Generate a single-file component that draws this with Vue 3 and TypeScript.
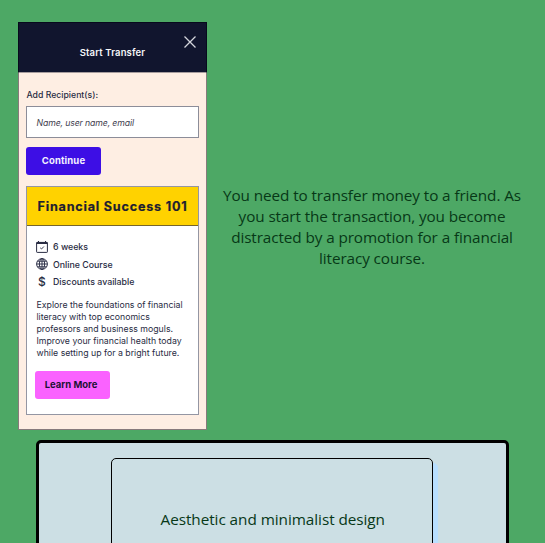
<script setup lang="ts">
interface Fact {
  icon: 'calendar' | 'globe' | 'dollar'
  label: string
}

const facts: Fact[] = [
  { icon: 'calendar', label: '6 weeks' },
  { icon: 'globe', label: 'Online Course' },
  { icon: 'dollar', label: 'Discounts available' },
]

const scenario: string[] = [
  'You need to transfer money to a friend. As',
  'you start the transaction, you become',
  'distracted by a promotion for a financial',
  'literacy course.',
]

const blurb: string[] = [
  'Explore the foundations of financial',
  'literacy with top economics',
  'professors and business moguls.',
  'Improve your financial health today',
  'while setting up for a bright future.',
]
</script>

<template>
  <main class="page">
    <section class="question">
      <div class="phone">
        <header class="phone-header">
          <svg class="close" viewBox="0 0 12 12" width="12" height="12">
            <path d="M.5.5 11.5 11.5M11.5.5.5 11.5" fill="none" stroke="#d4d5dc" stroke-width="1.3" />
          </svg>
          <span class="phone-title">Start Transfer</span>
        </header>
        <div class="phone-body">
          <div class="label">Add Recipient(s):</div>
          <div class="field"><span>Name, user name, email</span></div>
          <button class="btn continue">Continue</button>
          <article class="promo">
            <h2 class="promo-title">Financial Success 101</h2>
            <div class="promo-body">
              <ul class="facts">
                <li v-for="fact in facts" :key="fact.icon">
                  <svg v-if="fact.icon === 'calendar'" viewBox="0 0 12 12" width="12" height="12">
                    <rect x=".6" y="1.4" width="10.8" height="10" rx=".6" fill="none" stroke="#292c43" stroke-width="1" />
                    <path d="M.6 1h10.8v2H.6zM2 0h1v1H2zM9 0h1v1H9z" fill="#292c43" />
                    <path d="m4.2 6.8 1.3 1.2 2.4-2.5" fill="none" stroke="#292c43" stroke-width=".9" />
                  </svg>
                  <svg v-else-if="fact.icon === 'globe'" viewBox="0 0 12 12" width="12" height="12">
                    <g fill="none" stroke="#292c43" stroke-width=".95">
                      <circle cx="6" cy="6" r="5.4" />
                      <ellipse cx="6" cy="6" rx="2.6" ry="5.4" />
                      <path d="M6 .6v10.8M.6 6h10.8M1.4 3.2h9.2M1.4 8.8h9.2" />
                    </g>
                  </svg>
                  <span v-else class="dollar">$</span>
                  <span>{{ fact.label }}</span>
                </li>
              </ul>
              <p class="blurb">
                <span v-for="line in blurb" :key="line">{{ line }}</span>
              </p>
              <button class="btn learn">Learn More</button>
            </div>
          </article>
        </div>
      </div>
      <p class="scenario">
        <span v-for="line in scenario" :key="line">{{ line }}</span>
      </p>
    </section>
    <section class="answers">
      <div class="answer">Aesthetic and minimalist design</div>
    </section>
  </main>
</template>

<style>
body {
  background: #4da865;
  overflow: hidden;
}
</style>

<style scoped>
.page {
  box-sizing: border-box;
  height: 543px;
  padding: 22px 18px 0;
  overflow: hidden;
  background: #4da865;
  font-family: 'Open Sans', 'Noto Sans', sans-serif;
}
.question {
  display: flex;
  align-items: center;
}
.phone {
  box-sizing: border-box;
  flex: none;
  width: 189px;
  height: 408px;
  border: 1px solid #877a7c;
  background: #feeee3;
  font-family: Inter, sans-serif;
  color: #292c43;
}
.phone-header {
  display: flex;
  flex-direction: column;
  box-sizing: border-box;
  height: 51px;
  margin: -1px -1px 0;
  padding: 13px 11px 0 0;
  border: 1px solid #070a1c;
  border-bottom-color: #a79d9e;
  background: #11152e;
}
.close {
  align-self: flex-end;
  margin-right: -1px;
}
.phone-title {
  margin: -1px -11px 0 0;
  text-align: center;
  font-size: 9.5px;
  line-height: 12px;
  font-weight: 600;
  letter-spacing: 0.15px;
  color: #f5f5f8;
}
.phone-body {
  padding: 16px 7px 0;
}
.label {
  height: 12px;
  padding-left: 0.5px;
  font-size: 8.7px;
  line-height: 12px;
  font-weight: 500;
}
.field {
  box-sizing: border-box;
  height: 32px;
  margin-top: 5px;
  padding-left: 9.5px;
  border: 1px solid #8c8d99;
  background: #fff;
  font-size: 8.7px;
  line-height: 32px;
  font-style: italic;
  letter-spacing: -0.12px;
  color: #3f4150;
  white-space: nowrap;
}
.btn {
  display: block;
  width: 75px;
  height: 28px;
  padding: 0;
  border: 0;
  border-radius: 3px;
  font-family: inherit;
  font-size: 9.5px;
  line-height: 28px;
  font-weight: 700;
}
.continue {
  margin-top: 9px;
  background: #3d0ee5;
  color: #f4f0ff;
  letter-spacing: 0.15px;
}
.promo {
  box-sizing: border-box;
  height: 229px;
  margin-top: 11px;
  border: 1px solid #9496a3;
  background: #fff;
}
.promo-title {
  box-sizing: border-box;
  height: 39px;
  margin: 0;
  border-bottom: 1px solid #76652b;
  background: #ffd200;
  text-align: center;
  font-size: 12.6px;
  line-height: 40px;
  font-weight: 700;
  letter-spacing: 0.8px;
  -webkit-text-stroke: 0.2px #1e2031;
  color: #1e2031;
  white-space: nowrap;
}
.promo-body {
  padding: 12px 7.5px 0;
}
.facts {
  display: grid;
  grid-auto-rows: 17.5px;
  margin: 0;
  padding: 0 0 0 1.5px;
  list-style: none;
  font-size: 8.8px;
  font-weight: 500;
}
.facts li {
  display: flex;
  align-items: center;
  gap: 5px;
}
.dollar {
  width: 12px;
  text-align: center;
  font-size: 12px;
  line-height: 12px;
}
.blurb {
  margin: 8px 0 0 2px;
  font-size: 8.75px;
  line-height: 12.2px;
}
.blurb span,
.scenario span {
  display: block;
  white-space: nowrap;
}
.learn {
  margin: 11.5px 0 0;
  padding-right: 2px;
  background: #fa62ff;
  color: #1c1235;
}
.scenario {
  flex: 1;
  margin: 2px 5px 0 15px;
  text-align: center;
  font-size: 15.3px;
  line-height: 21px;
  letter-spacing: -0.1px;
  color: #073817;
}
.answers {
  box-sizing: border-box;
  display: flex;
  justify-content: center;
  width: 473px;
  height: 130px;
  margin: 10px 18px 0;
  padding: 15px 1px 0 0;
  border: 3px solid #000;
  border-radius: 5px;
  background: #ccdfe4;
}
.answer {
  box-sizing: border-box;
  width: 322px;
  height: 124px;
  padding-left: 1.5px;
  border: 1px solid #000;
  border-radius: 5px;
  box-shadow: 5px 5px 0 #b8dfff;
  background: #ccdfe4;
  text-align: center;
  font-size: 15.3px;
  line-height: 120px;
  letter-spacing: -0.05px;
  color: #073817;
}
</style>
